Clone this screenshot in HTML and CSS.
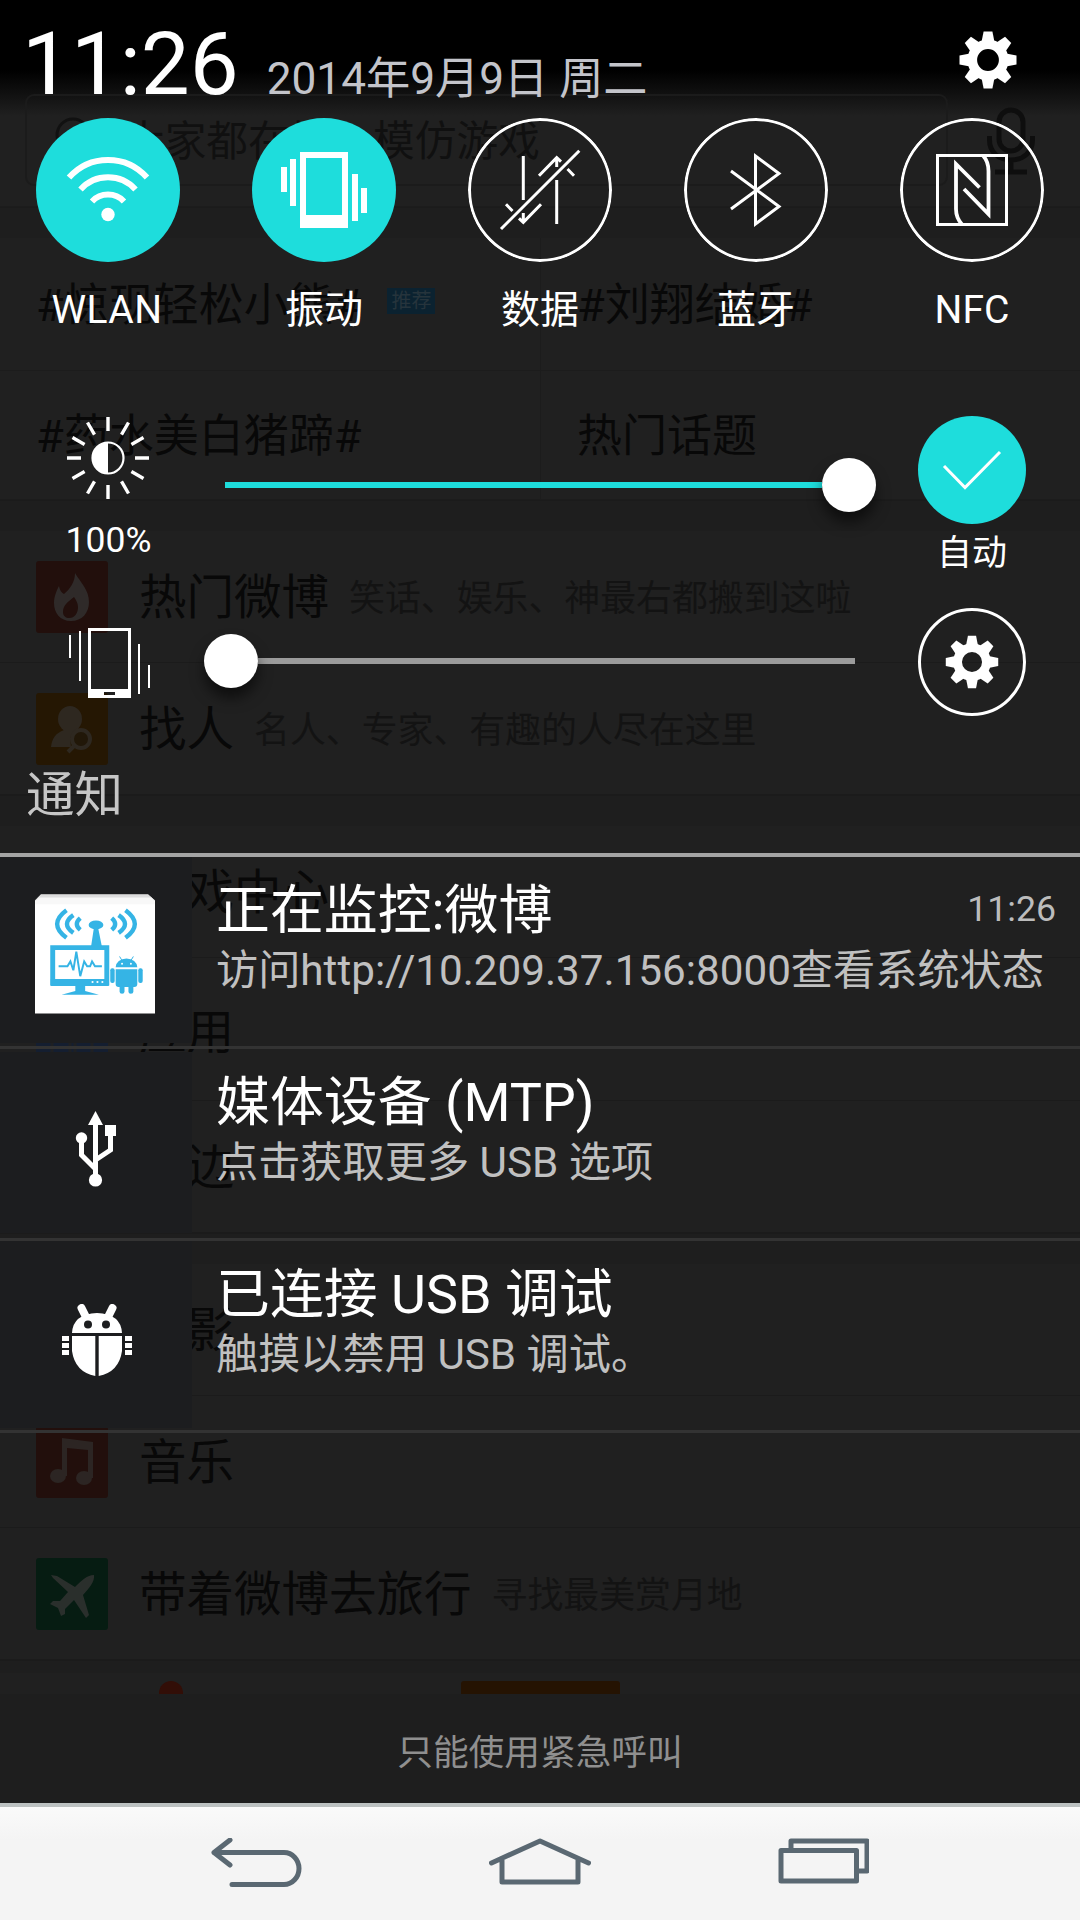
FILE: index.html
```html
<!DOCTYPE html>
<html lang="zh-CN">
<head>
<meta charset="utf-8">
<title>通知</title>
<link rel="stylesheet" href="styles.css">
</head>
<body>
<svg class="defs" width="0" height="0" aria-hidden="true">
  <defs>
    <g id="tooth"><path d="M-6.5 -18 L-4.4 -28.5 H4.4 L6.5 -18 Z"/></g>
    <g id="gear">
      <circle r="15.7" fill="none" stroke="#fff" stroke-width="9.6"/>
      <g fill="#fff">
        <use href="#tooth"/><use href="#tooth" transform="rotate(45)"/><use href="#tooth" transform="rotate(90)"/><use href="#tooth" transform="rotate(135)"/>
        <use href="#tooth" transform="rotate(180)"/><use href="#tooth" transform="rotate(225)"/><use href="#tooth" transform="rotate(270)"/><use href="#tooth" transform="rotate(315)"/>
      </g>
    </g>
  </defs>
</svg>
<div class="screen">

  <div class="app">
    <div class="search">
      <div class="search-box">
        <svg width="44" height="44" viewBox="0 0 44 44" fill="none" stroke="#111" stroke-width="3"><circle cx="19" cy="19" r="16"/><path d="M30 31l10 10"/></svg>
        <span>大家都在搜：模仿游戏</span>
      </div>
      <svg class="mic" width="48" height="68" viewBox="0 0 48 68" fill="none" stroke="#0e0e0e" stroke-width="5"><rect x="12" y="3" width="24" height="41" rx="12"/><path d="M2.500 29v4c0 12 9 20 21.500 20s21.500-8 21.500-20v-4M24 53v12M8 65h32"/></svg>
    </div>
    <div class="band band-top"></div>
    <div class="topics">
      <div class="topic">#惊现轻松小熊#<span class="tag">推荐</span></div>
      <div class="topic">#刘翔结婚#</div>
      <div class="topic">#药水美白猪蹄#</div>
      <div class="topic">热门话题</div>
    </div>
    <div class="band"></div>
    <div class="entry">
      <svg class="tile red" viewBox="0 0 72 72"><path d="M39 12c6 10 14 17 14 29 0 11-7 19-18 19S18 52 18 42c0-7 3-13 5-17 1 5 3 7 5 8 6-5 11-12 11-21zM38 36c-6 5-11 8-11 15 0 4 3 6 6 6 6 0 9-5 9-11 0-4-2-7-4-10z" fill="#2f2a29" fill-rule="evenodd"/></svg>
      <b>热门微博</b><i>笑话、娱乐、神最右都搬到这啦</i>
    </div>
    <div class="entry">
      <svg class="tile orange" viewBox="0 0 72 72"><g fill="#2e2820"><ellipse cx="34" cy="26" rx="12" ry="13"/><path d="M15 54c1-9 5-14 13-17h11l-5 8 1 9z"/></g><circle cx="45" cy="46" r="9" fill="#211708" stroke="#2e2820" stroke-width="4"/><path d="M38 53l-6 6" stroke="#2e2820" stroke-width="4"/></svg>
      <b>找人</b><i>名人、专家、有趣的人尽在这里</i>
    </div>
    <div class="band"></div>
    <div class="entry"><svg class="tile orange" viewBox="0 0 72 72"></svg><b>游戏中心</b></div>
    <div class="entry tall"><svg class="tile blue" viewBox="0 0 72 72"><path d="M16 30v42M34 30v42M39 30v42M56 30v42" stroke="#1e2023" stroke-width="3"/></svg><b>应用</b></div>
    <div class="entry"><svg class="tile red" viewBox="0 0 72 72"></svg><b>周边</b></div>
    <div class="band"></div>
    <div class="entry"><svg class="tile red" viewBox="0 0 72 72"></svg><b>电影</b></div>
    <div class="entry">
      <svg class="tile red" viewBox="0 0 72 72"><g fill="#2c2523"><ellipse cx="22" cy="50" rx="8" ry="7"/><ellipse cx="48" cy="52" rx="8" ry="7"/><path d="M26 12l31 4v36h-5V24l-21-2v28h-5z"/></g></svg>
      <b>音乐</b>
    </div>
    <div class="entry">
      <svg class="tile green" viewBox="0 0 72 72"><path d="M15 17l6 1 18 11c7-7 12-12 19-12 1 7-5 13-11 20l6 20-3 3-12-18-9 9v5l-4 2-3-8-8-4 3-3 7 0 8-9L17 20z" fill="#2a2f2c"/></svg>
      <b>带着微博去旅行</b><i>寻找最美赏月地</i>
    </div>
    <div class="band band-tabs"></div>
    <div class="tabs"><span class="dot"></span><span class="compose"></span></div>
    <div class="app-end"></div>
  </div>

  <div class="shade">
    <header class="head">
      <time class="clock">11:26</time>
      <span class="date">2014年9月9日 周二</span>
      <svg class="settings" width="58" height="58" viewBox="-29 -29 58 58"><use href="#gear"/></svg>
    </header>

    <section class="toggles">
      <div class="toggle on">
        <svg viewBox="-72 -72 144 144" fill="none" stroke="#fff" stroke-width="6"><path d="M-39 -12.500a52 52 0 0 1 78 0M-27.500 -.5a37 37 0 0 1 55 0M-16 11.500a22 22 0 0 1 32 0"/><circle cy="24.500" r="6.700" fill="#fff" stroke="none"/></svg>
        <span class="wlan">WLAN</span>
      </div>
      <div class="toggle on">
        <svg viewBox="-72 -72 144 144" fill="#fff"><path fill-rule="evenodd" d="M-24 -38h48v76h-48zM-18 -32v57h36v-57z"/><path d="M-43 -23h6v25h-6zM-34 -31h6v47h-6zM28 -16h6v47h-6zM37 -2h6v25h-6z"/></svg>
        <span>振动</span>
      </div>
      <div class="toggle">
        <svg viewBox="-72 -72 144 144" fill="none" stroke="#fff" stroke-width="3"><circle r="70.500"/><path d="M-39 39L39.300 -39.300M-16.700 -34V10M-34 14.300l6.500 6.700M-21 28.300l4.300 4L1 14.300M-16.700 32.300V23M16.700 34V-10M34 -14.300l-6.500-6.700M21 -28.300l-4.300-4L-1 -14.300M16.700 -32.300V-23"/></svg>
        <span>数据</span>
      </div>
      <div class="toggle">
        <svg viewBox="-72 -72 144 144" fill="none" stroke="#fff" stroke-width="3"><circle r="70.500"/><path d="M-25 -19L23 16.500L-.5 34V-34L23 -16.500L-25 19"/></svg>
        <span>蓝牙</span>
      </div>
      <div class="toggle">
        <svg viewBox="-72 -72 144 144" fill="none" stroke="#fff" stroke-width="3"><circle r="70.500"/><path d="M-34.500 -34.500h69v69h-69z"/><path d="M-10 34.500C-14 30 -16 26 -16 19V-26L7.500 -2.500M11 -34.500C15 -30 16.500 -26 16.500 -19V24L-8 -1" stroke-width="3.800"/></svg>
        <span>NFC</span>
      </div>
    </section>

    <section class="control brightness">
      <div class="side">
        <svg width="84" height="84" viewBox="-42 -42 84 84" fill="none" stroke="#fff" stroke-width="3.400">
          <circle r="15.500" stroke-width="2.200"/><path d="M0 -15.500A15.500 15.500 0 0 0 0 15.500z" fill="#fff" stroke="none"/>
          <path d="M0 -41V-27M0 41V27M-41 0H-27M41 0H27M-20.500 -35.500L-13.500 -23.400M20.500 -35.500L13.500 -23.400M-20.500 35.500L-13.500 23.400M20.500 35.500L13.500 23.400M-35.500 -20.500L-23.400 -13.500M35.500 -20.500L23.400 -13.500M-35.500 20.500L-23.400 13.500M35.500 20.500L23.400 13.500"/>
        </svg>
        <span class="percent">100%</span>
      </div>
      <div class="slider full"><span class="track"></span><span class="thumb"></span></div>
      <div class="side right">
        <svg width="108" height="108" viewBox="-54 -54 108 108"><circle r="54" fill="#1edddc"/><path d="M-28 -4L-7 17.500L28 -18" fill="none" stroke="#fff" stroke-width="3"/></svg>
        <span class="auto">自动</span>
      </div>
    </section>

    <section class="control volume">
      <div class="side">
        <svg width="82" height="70" viewBox="0 0 82 70" fill="#fff"><path fill-rule="evenodd" d="M20 0h43v70H20zM23 3v58h37V3zM36 64v3h11v-3z"/><path d="M1 7h2v23H1zM11 3h2v50h-2zM70 16h2v50h-2zM80 37h2v23h-2z"/></svg>
      </div>
      <div class="slider empty"><span class="thumb"></span><span class="track"></span></div>
      <div class="side right">
        <svg width="108" height="108" viewBox="-54 -54 108 108"><circle r="52.500" fill="none" stroke="#fff" stroke-width="3"/><use href="#gear" transform="scale(.92)"/></svg>
      </div>
    </section>

    <h2 class="heading">通知</h2>

    <section class="list">
      <article class="note">
        <div class="pic pic-app">
          <svg width="120" height="120" viewBox="0 0 122 121">
            <path d="M6 0H115L122 6V121H0V6z" fill="#fff"/><path d="M6 0H115L122 6H0z" fill="#ddd"/><path d="M4 3H118L122 7V10H0V7z" fill="#f8f8f8"/>
            <g fill="none" stroke="#35b4e5" stroke-width="4.500"><path d="M32 16q-19 14 0 28M39 21q-13 9 0 18M46 24q-7 6 0 12" /><path d="M92 16q19 14 0 28M85 21q13 9 0 18M78 24q7 6 0 12"/><path d="M18 54h55v36H18z" stroke-width="5"/></g>
            <g fill="#35b4e5"><ellipse cx="62" cy="31" rx="7.500" ry="4.500"/><path d="M60 33h4l4 20H57zM16 86h59v7H16zM41 92h10v6l14 4H27l14-4z"/>
              <path d="M82 74a11 9 0 0 1 22 0zM82 76h22v15q0 3-3 3H85q-3 0-3-3zM86 92h5v7q0 2-2.500 2T86 99zM95 92h5v7q0 2-2.500 2T95 99z"/><rect x="76.500" y="75" width="4.500" height="15" rx="2"/><rect x="105" y="75" width="4.500" height="15" rx="2"/></g>
            <path d="M86 63l3 5M100 63l-3 5" stroke="#35b4e5"/>
            <path d="M24 73h9l3-5 3 9 3-19 4 25 4-15 3 5h3l2-5 3 5h7" fill="none" stroke="#35b4e5" stroke-width="2"/>
            <g fill="#fff"><circle cx="58.500" cy="89" r="1.100"/><circle cx="63.500" cy="89" r="1.100"/><circle cx="68.500" cy="89" r="1.100"/><circle cx="88.500" cy="70.500" r="1"/><circle cx="97.500" cy="70.500" r="1"/></g>
          </svg>
        </div>
        <div class="text"><div class="row"><h3>正在监控:微博</h3><time>11:26</time></div><p>访问http://10.209.37.156:8000查看系统状态</p></div>
      </article>
      <article class="note">
        <div class="pic pic-usb">
          <svg width="42" height="76" viewBox="0 0 42 76" fill="#fff"><path d="M20.500 0L28 14H13z"/><circle cx="6.500" cy="27" r="5.700"/><path d="M30 14h11v11H30z"/><circle cx="20.500" cy="69" r="6.600"/><path d="M20.500 10V68M6.500 28v16l14 14M35.500 22v17L20.500 49" fill="none" stroke="#fff" stroke-width="5"/></svg>
        </div>
        <div class="text"><div class="row"><h3>媒体设备 (MTP)</h3></div><p>点击获取更多 USB 选项</p></div>
      </article>
      <article class="note">
        <div class="pic pic-bug">
          <svg width="70" height="72" viewBox="0 0 70 72" fill="#fff"><path d="M10 29q1-19 25-20 24 1 25 20zM10 32h23.300v40Q13 68 10 47zM60 32H36.700v40Q57 68 60 47z"/><path d="M19.500 4l5 10M50.500 4l-5 10" stroke="#fff" stroke-width="8" stroke-linecap="round"/><circle cx="26" cy="20.500" r="4" fill="#1c1d1f"/><circle cx="44" cy="20.500" r="4" fill="#1c1d1f"/><path d="M0 32h7v5H0zM0 39h7v5H0zM0 46h7v5H0zM63 32h7v5h-7zM63 39h7v5h-7zM63 46h7v5h-7z"/></svg>
        </div>
        <div class="text"><div class="row"><h3>已连接 USB 调试</h3></div><p>触摸以禁用 USB 调试。</p></div>
      </article>
    </section>

    <div class="carrier">只能使用紧急呼叫</div>

    <nav class="nav">
      <svg width="92" height="50" viewBox="0 0 92 50"><path d="M19 2L3 14.500L19 27M3 14.500H73a15 16 0 0 1 0 32H21"/></svg>
      <svg width="102" height="48" viewBox="0 0 102 48"><path d="M2.500 25L51 3L99.500 25M13 21V44H89V21"/></svg>
      <svg width="92" height="46" viewBox="0 0 92 46"><path d="M4 12.500H79.500V43H4zM14 11V3H90V33H80.500"/></svg>
    </nav>
  </div>
</div>
</body>
</html>
```
FILE: styles.css
```css
* { box-sizing: border-box; }
body {
  margin: 0;
  background: #202020;
  font-family: Roboto, "Noto Sans CJK SC", sans-serif;
  color: #fff;
}
svg { display: block; flex: none; }
h2, h3, p { margin: 0; font-weight: 400; }
.defs { position: absolute; }

.screen { display: grid; width: 1080px; height: 1920px; overflow: hidden; }
.app, .shade { grid-area: 1 / 1; width: 1080px; height: 1920px; display: flex; flex-direction: column; }

/* dimmed app under the shade */
.app {
  background: linear-gradient(#000 70px, #202020 116px);
  color: #080808;
  font-family: "Noto Sans CJK SC", sans-serif;
}
.app > * { flex: none; }
.search { height: 207px; padding: 94px 0 0 25px; display: flex; align-items: flex-start; border-bottom: 1px solid #1c1c1c; }
.search-box { width: 923px; height: 92px; border: 2px solid #1b1b1b; border-radius: 9px; display: flex; align-items: center; padding: 0 0 4px 27px; gap: 25px; font-size: 41.700px; color: #101010; line-height: 84px; }
.mic { margin: 13px 0 0 39px; }
.band { height: 31px; background: #1e1e1e; border-top: 1px solid #1b1b1b; }
.topics { height: 262px; display: grid; grid-template-columns: 541px 539px; grid-template-rows: 133px 129px; font-family: Roboto, "Noto Sans CJK SC", sans-serif; font-size: 45px; }
.topic { padding: 0 0 6px 36px; display: flex; align-items: center; border-bottom: 1px solid #1c1c1c; }
.topic:nth-child(odd) { border-right: 1px solid #1c1c1c; }
.tag { width: 48px; height: 26px; margin-left: 26px; background: #0b2230; color: #26343c; font-size: 20px; line-height: 26px; text-align: center; }
.entry { height: 132px; padding-left: 36px; display: flex; align-items: center; border-bottom: 1px solid #1b1b1b; }
.entry.tall { height: 143px; padding-top: 5px; }
.entry b { font-size: 47.500px; font-weight: 400; margin: 0 20px 0 31px; line-height: 70px; padding-bottom: 5px; }
.entry i { font-size: 35.900px; font-style: normal; color: #131313; padding-bottom: 3px; }
.tile { width: 72px; height: 72px; border-radius: 3px; }
.red { background: #220f0c; }
.orange { background: #251703; }
.blue { background: #141e30; }
.green { background: #061c12; }
.band-tabs { height: 13px; }
.tabs { height: 21px; padding: 8px 0 0 159px; display: flex; gap: 278px; overflow: hidden; }
.dot { width: 24px; height: 24px; border-radius: 50%; background: #320e07; flex: none; }
.compose { width: 159px; height: 24px; background: #251302; border-radius: 3px; }
.app-end { flex: 1; background: #1e1e1e; }

/* notification shade */
.shade > * { flex: none; }
.head { height: 118px; padding: 0 63px 0 22px; display: flex; align-items: baseline; }
.clock { font-size: 87px; line-height: 128px; }
.date { font-size: 44.200px; color: #c3c4ca; margin-left: 28px; padding-top: 1px; }
.settings { margin-left: auto; align-self: flex-start; margin-top: 31px; }
.toggles { height: 242px; display: grid; grid-template-columns: repeat(5, 216px); text-align: center; font-size: 39px; }
.toggle svg { width: 144px; height: 144px; margin: 0 auto 18px; border-radius: 50%; }
.toggle.on svg { background: #1edddc; }
.toggle span { display: block; line-height: 61px; }
.toggle .wlan { padding-right: 2px; letter-spacing: .5px; }

.control { display: grid; grid-template-columns: 216px 648px 216px; }
.side { display: flex; flex-direction: column; align-items: center; }
.brightness { height: 248px; padding-top: 56px; }
.percent { font-size: 35.500px; line-height: 42px; margin-top: 19px; padding-left: 1px; }
.auto { font-size: 35px; line-height: 50px; margin-top: 5px; }
.slider { height: 54px; display: flex; align-items: center; }
.track { height: 6px; flex: 1; }
.thumb { width: 54px; height: 54px; border-radius: 50%; background: #fff; box-shadow: 0 10px 14px rgba(0, 0, 0, .55); flex: none; z-index: 1; }
.full { margin: 42px 4px 0 9px; width: 651px; }
.full .track { background: #1edddc; }
.empty { margin: 26px 9px 0 -12px; }
.empty .track { background: #9b9b9b; }
.volume { height: 155px; }
.volume .side:first-child { padding: 20px 0 0 2px; }

.heading { height: 90px; padding: 2px 26px 0; font-size: 48.500px; line-height: 62px; color: #c6c6c6; }
.list { border-top: 4px solid #a4a4a4; }
.note { height: 192px; display: grid; grid-template-columns: 192px 1fr; border-bottom: 3px solid #333; }
.pic { background: #1c1d1f; display: flex; align-items: center; justify-content: center; }
.pic-app { height: 186px; padding: 8px 3px 0 0; }
.pic-usb { height: 181px; margin-top: 3px; padding-top: 13px; }
.pic-bug { height: 187px; padding: 11px 0 0 2px; }
.text { padding: 20px 24px 0 24px; }
.row { display: flex; justify-content: space-between; height: 67px; }
h3 { font-size: 53.900px; line-height: 68px; white-space: nowrap; }
.row time { font-size: 35.700px; line-height: 65px; color: #bcbcbc; }
.note p { font-size: 42.200px; line-height: 54px; color: #c0c0c0; white-space: nowrap; }
.carrier { height: 370px; padding-top: 295px; font-size: 35.700px; line-height: 50px; text-align: center; color: #8f8f8f; }

.nav { height: 117px; border-top: 4px solid #bcc1c1; background: linear-gradient(#fafafa, #f4f4f4 30%); display: flex; padding: 31px 211px 0; justify-content: space-between; }
.nav path { fill: none; stroke: #5a6872; stroke-width: 5; stroke-linecap: round; stroke-linejoin: round; }
```
